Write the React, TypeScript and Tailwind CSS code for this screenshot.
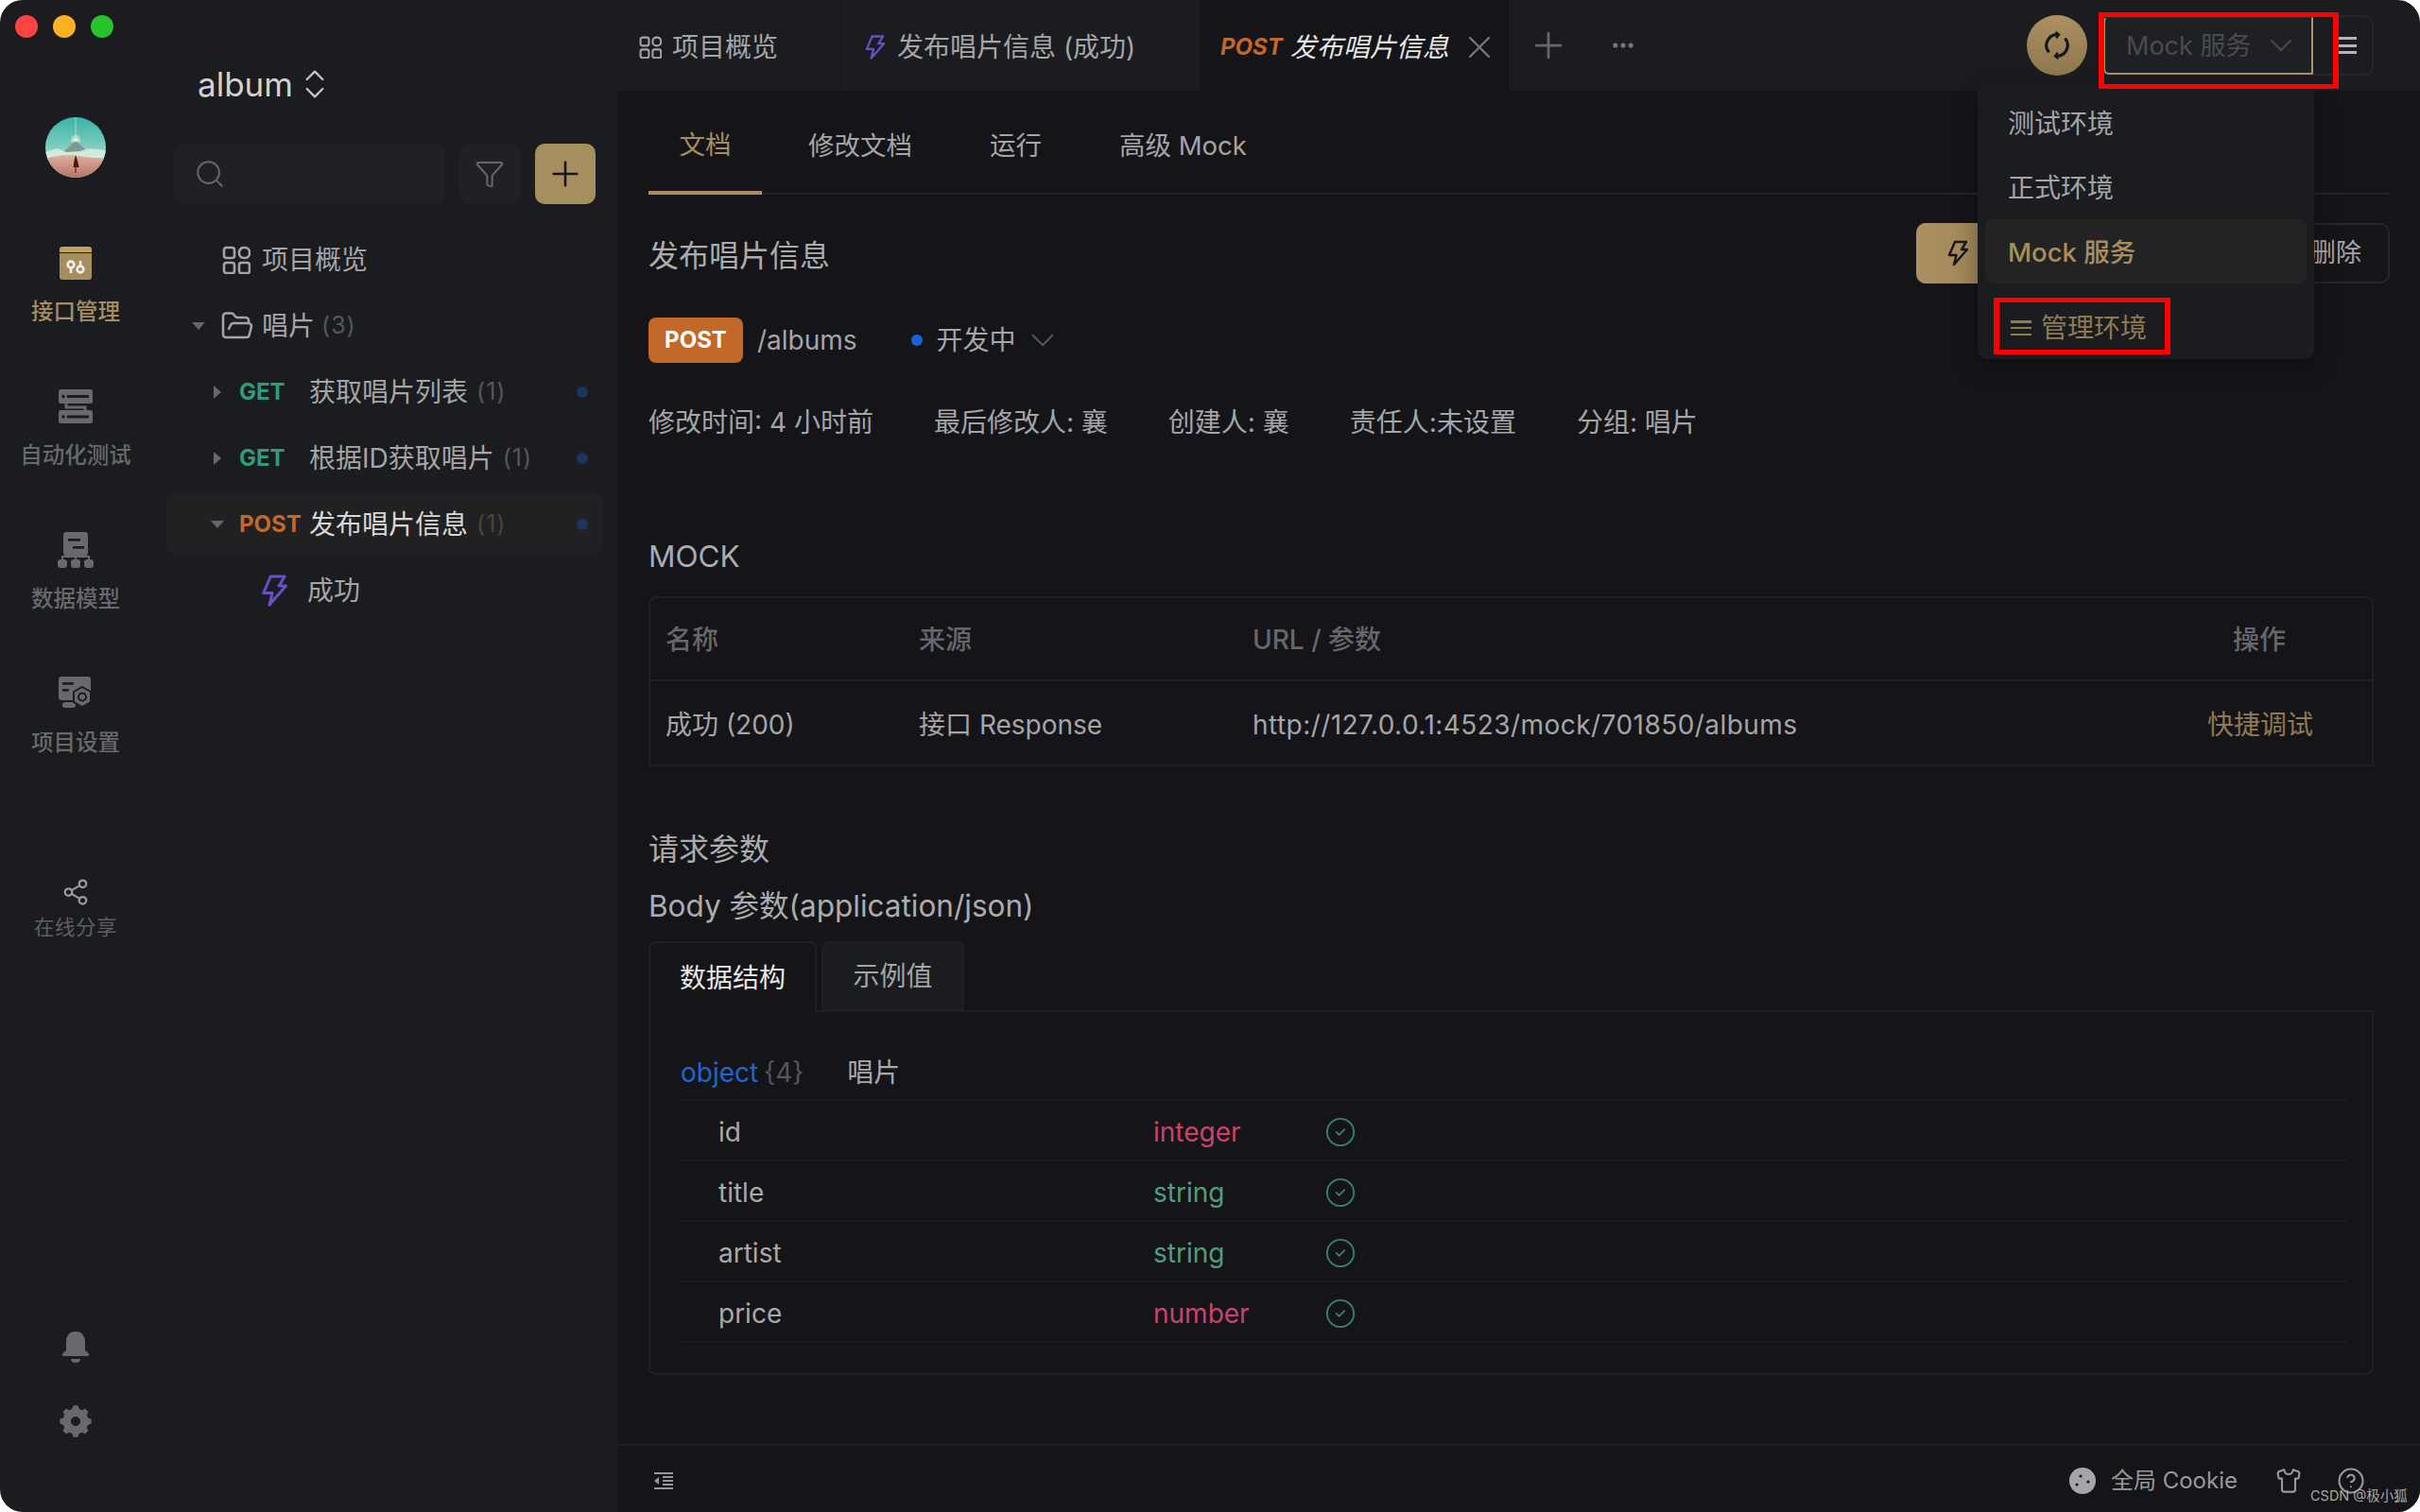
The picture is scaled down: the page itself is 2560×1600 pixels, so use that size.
import { ChevronDown, ChevronsUpDown, CircleCheck, CircleHelp, Ellipsis, Filter, FolderOpen, Plus, Search, Share2, Shirt, X } from "lucide-react";
import { RiSettings5Fill } from "react-icons/ri";
import type { ReactNode } from "react";

function Bolt({ className }: { className?: string }) {
  return (
    <svg viewBox="0 0 24 28" fill="none" stroke="currentColor" strokeWidth="2.4" strokeLinejoin="round" className={className}>
      <path d="M9 2h12l-5 8h6L8 26l2.5-10H3z" />
    </svg>
  );
}

function GridIcon({ className }: { className?: string }) {
  return (
    <svg viewBox="0 0 30 30" fill="none" stroke="currentColor" strokeWidth="2.6" className={className}>
      <rect x="2" y="2" width="11" height="11" rx="2.5" />
      <rect x="18" y="2" width="11" height="11" rx="5" />
      <rect x="2" y="18" width="11" height="11" rx="2.5" />
      <rect x="18" y="18" width="11" height="11" rx="2.5" />
    </svg>
  );
}

function Triangle({ dir }: { dir: "down" | "right" }) {
  if (dir === "down") {
    return <span className="h-0 w-0 border-x-[7px] border-t-[8px] border-x-transparent border-t-[#66676b]" />;
  }
  return <span className="mr-[3px] h-0 w-0 border-y-[7px] border-l-[8px] border-y-transparent border-l-[#66676b]" />;
}

function ApiIcon() {
  return (
    <svg viewBox="0 0 36 36" className="h-[36px] w-[36px]">
      <path d="M1 4a3 3 0 0 1 3-3h28a3 3 0 0 1 3 3v3H1z" fill="#c2a25c" />
      <path d="M1 8h34v25a3 3 0 0 1-3 3H4a3 3 0 0 1-3-3z" fill="#a78e5f" />
      <circle cx="13" cy="20" r="3.4" fill="none" stroke="#f4f1ea" strokeWidth="2.6" />
      <path d="M13 23v6M23 16v6" stroke="#f4f1ea" strokeWidth="2.6" />
      <circle cx="23" cy="25" r="3.4" fill="none" stroke="#f4f1ea" strokeWidth="2.6" />
    </svg>
  );
}

function AutoIcon() {
  return (
    <svg viewBox="0 0 36 36" className="h-[36px] w-[36px]">
      <rect x="0" y="0" width="36" height="15" rx="2.5" fill="#68696d" />
      <rect x="0" y="22" width="36" height="14" rx="2.5" fill="#68696d" />
      <path d="M8 15v4h20v3" fill="none" stroke="#68696d" strokeWidth="3" />
      <circle cx="5" cy="7.5" r="1.7" fill="#1a1c20" />
      <rect x="9" y="6" width="23" height="3" fill="#1a1c20" />
      <circle cx="5" cy="29" r="1.7" fill="#1a1c20" />
      <rect x="9" y="27.5" width="23" height="3" fill="#1a1c20" />
    </svg>
  );
}

function ModelIcon() {
  return (
    <svg viewBox="0 0 38 38" className="h-[38px] w-[38px]" fill="#68696d">
      <path d="M6 3a3 3 0 0 1 3-3h20a3 3 0 0 1 3 3v19a3 3 0 0 1-3 3H9a3 3 0 0 1-3-3z" />
      <rect x="11" y="7" width="13" height="2.6" fill="#1a1c20" />
      <rect x="16" y="15" width="12" height="2.6" fill="#1a1c20" />
      <rect x="0" y="29" width="10" height="9" rx="3" />
      <rect x="14" y="29" width="10" height="9" rx="3" />
      <rect x="28" y="29" width="10" height="9" rx="3" />
      <path d="M5 29v-3h28v3M19 25v4" stroke="#68696d" strokeWidth="2" fill="none" />
    </svg>
  );
}

function SettingIcon() {
  return (
    <svg viewBox="0 0 36 36" className="h-[36px] w-[36px]">
      <path d="M0 3a3 3 0 0 1 3-3h28a3 3 0 0 1 3 3v19a3 3 0 0 1-3 3H3a3 3 0 0 1-3-3z" fill="#68696d" />
      <rect x="4" y="6" width="12" height="2.6" fill="#1a1c20" />
      <rect x="4" y="13" width="7" height="2.6" fill="#1a1c20" />
      <rect x="4" y="27" width="14" height="6" rx="3" fill="#68696d" />
      <path d="M25 11l9 5v11l-9 5-9-5V16z" fill="#68696d" stroke="#1a1c20" strokeWidth="2" />
      <circle cx="25" cy="21.5" r="4" fill="none" stroke="#1a1c20" strokeWidth="2" />
    </svg>
  );
}

function BellIcon() {
  return (
    <svg viewBox="0 0 28 34" className="h-[34px] w-[28px]" fill="#68696d">
      <path d="M14 0c6.6 0 10 4.6 10 11v8c0 2 4 3.4 4 5.4 0 1.2-1 1.6-2 1.6H2c-1 0-2-.4-2-1.6C0 22.400 4 21 4 19v-8C4 4.600 7.400 0 14 0z" />
      <path d="M9 29h10c0 2.600-2.400 4-5 4s-5-1.400-5-4z" />
    </svg>
  );
}

function SyncIcon() {
  return (
    <svg viewBox="0 0 30 30" fill="none" stroke="#16171a" strokeWidth="3.2" className="h-[30px] w-[30px]">
      <path d="M16 3.600A11.500 11.500 0 0 0 6.500 22.500" />
      <path d="M14 26.400A11.500 11.500 0 0 0 23.500 7.500" />
      <path d="M13.500 1l3.500 2.800-2.800 3.500M16.500 29l-3.500-2.800 2.800-3.500" strokeWidth="2.4" />
    </svg>
  );
}

function Avatar() {
  return (
    <svg viewBox="0 0 64 64" className="h-[64px] w-[64px] rounded-full">
      <defs>
        <linearGradient id="sky" x1="0" y1="0" x2="0" y2="1">
          <stop offset="0" stopColor="#3ab3a6" />
          <stop offset="0.5" stopColor="#7fcfbf" />
          <stop offset="0.7" stopColor="#c8e6da" />
        </linearGradient>
        <linearGradient id="sand" x1="0" y1="0" x2="0" y2="1">
          <stop offset="0" stopColor="#dfb29d" />
          <stop offset="1" stopColor="#b5736a" />
        </linearGradient>
      </defs>
      <rect width="64" height="64" fill="url(#sky)" />
      <path d="M32 0v24" stroke="#d9f1e6" strokeWidth="0.6" />
      <circle cx="32" cy="24" r="5" fill="#dff3e2" opacity="0.55" />
      <path d="M19 37l9-9 4-3 4 3 9 9z" fill="#7f9892" />
      <circle cx="32" cy="24" r="2" fill="#f8efcf" />
      <path d="M0 37l12-4 10 4 14-1 10-3 18 2v9H0z" fill="#d8ece2" opacity="0.85" />
      <path d="M0 44q18-6 36-3t28 2v21H0z" fill="url(#sand)" />
      <path d="M32 40l2 6 1.500 7h-6l1-7z" fill="#4a1518" />
      <path d="M32 53v6" stroke="#8a4a48" strokeWidth="2" />
    </svg>
  );
}

function IndentIcon() {
  return (
    <svg viewBox="0 0 20 18" className="h-[18px] w-[20px]" fill="#98989a">
      <rect x="0" y="0" width="20" height="2" />
      <rect x="9" y="4" width="11" height="2" />
      <rect x="9" y="8" width="11" height="2" />
      <rect x="9" y="12" width="11" height="2" />
      <rect x="0" y="16" width="20" height="2" />
      <path d="M5 5v8L0 9z" />
    </svg>
  );
}

function RailItem({ icon, label, active }: { icon: ReactNode; label: string; active?: boolean }) {
  return (
    <div className="flex h-[152px] flex-col items-center pt-[12px]">
      <div className="flex h-[36px] items-center">{icon}</div>
      <div className={`mt-[18px] text-[23.5px] font-medium leading-[32px] ${active ? "text-[#a78e5f]" : "text-[#68696d]"}`}>{label}</div>
    </div>
  );
}

function ApiRow({ method, name, open, selected }: { method: string; name: string; open?: boolean; selected?: boolean }) {
  return (
    <div className={`relative flex items-center rounded-[10px] pt-[2px] ${selected ? "my-[2px] h-[66px] bg-[#212123]" : "h-[70px]"}`}>
      <div className="flex w-[77px] justify-end pr-[16px]">
        <Triangle dir={open ? "down" : "right"} />
      </div>
      <span className={`w-[74px] text-[24px] font-bold leading-none ${method === "GET" ? "text-[#2f9c77]" : "text-[#c26828]"}`}>{method}</span>
      <span className={selected ? "text-[#d8d8d8]" : "text-[#a5a5a7]"}>{name}</span>
      <span className={`ml-[9px] text-[25px] tracking-[1px] ${selected ? "text-[#4b4439]" : "text-[#56575b]"}`}>(1)</span>
      <span className="absolute right-[16px] h-[12px] w-[12px] rounded-full bg-[#1c3560]" />
    </div>
  );
}

function FieldRow({ name, type }: { name: string; type: "integer" | "string" | "number" }) {
  return (
    <div className="flex h-[64px] items-center border-b-2 border-[#1b1c21] pl-[40px] pt-[4px]">
      <span className="w-[460px] text-[#a9a9ab]">{name}</span>
      <span className={`w-[181px] ${type === "string" ? "text-[#4f9e7f]" : "text-[#c9446b]"}`}>{type}</span>
      <CircleCheck className="h-[34px] w-[34px] text-[#38806a]" strokeWidth={1.3} />
    </div>
  );
}

export default function App() {
  return (
    <div className="relative flex h-[1600px] w-[2560px] overflow-hidden rounded-[24px] bg-[#1a1c20] font-['Inter','Noto_Sans_CJK_SC',sans-serif] text-[28px] text-[#a5a5a7]">
      {/* left rail */}
      <div className="flex w-[160px] flex-col items-center">
        <div className="mt-[16px] flex gap-[16px] self-start pl-[16px]">
          <span className="h-[24px] w-[24px] rounded-full bg-[#fe4343]" />
          <span className="h-[24px] w-[24px] rounded-full bg-[#feb024]" />
          <span className="h-[24px] w-[24px] rounded-full bg-[#28c22c]" />
        </div>
        <div className="mt-[84px]">
          <Avatar />
        </div>
        <div className="mt-[60px]">
          <RailItem icon={<ApiIcon />} label="接口管理" active />
          <RailItem icon={<AutoIcon />} label="自动化测试" />
          <RailItem icon={<ModelIcon />} label="数据模型" />
          <RailItem icon={<SettingIcon />} label="项目设置" />
        </div>
        <div className="mt-[73px] flex flex-col items-center text-[#5e5f63]">
          <Share2 className="h-[30px] w-[30px] text-[#9c9c9e]" strokeWidth={1.8} />
          <span className="mt-[6px] text-[21.5px] tracking-[0.5px]">在线分享</span>
        </div>
        <div className="mt-auto flex flex-col items-center gap-[41px] pb-[76px] text-[#68696d]">
          <BellIcon />
          <RiSettings5Fill className="h-[40px] w-[40px]" />
        </div>
      </div>

      {/* api tree */}
      <div className="w-[494px] px-[16px]">
        <div className="flex h-[152px] items-start pl-[33px] pt-[67px]">
          <span className="text-[35px] leading-[44px] text-[#d2d2d4]">album</span>
          <ChevronsUpDown className="ml-[3px] mt-[2px] h-[40px] w-[40px] text-[#c5c5c7]" strokeWidth={1.4} />
        </div>
        <div className="flex h-[64px] gap-[16px] pl-[8px]">
          <div className="flex w-[286px] items-center rounded-[10px] bg-[#1f2125] pl-[21px]">
            <Search className="h-[34px] w-[34px] text-[#66676b]" strokeWidth={1.4} />
          </div>
          <div className="flex w-[64px] items-center justify-center rounded-[10px] bg-[#1f2125]">
            <Filter className="h-[32px] w-[32px] text-[#66676b]" strokeWidth={1.5} />
          </div>
          <div className="flex w-[64px] items-center justify-center rounded-[10px] bg-[#a78e5f]">
            <Plus className="h-[42px] w-[42px] text-[#16171a]" strokeWidth={1.5} />
          </div>
        </div>
        <div className="mt-[23px]">
          <div className="flex h-[70px] items-center pl-[59px] pt-[1px]">
            <GridIcon className="h-[30px] w-[30px] text-[#a5a5a7]" />
            <span className="ml-[12px]">项目概览</span>
          </div>
          <div className="flex h-[70px] items-center pt-[1px]">
            <div className="flex w-[57px] justify-end pr-[16px]">
              <Triangle dir="down" />
            </div>
            <FolderOpen className="h-[36px] w-[36px] text-[#a5a5a7]" strokeWidth={1.7} />
            <span className="ml-[8px]">唱片</span>
            <span className="ml-[7px] text-[25px] tracking-[1px] text-[#56575b]">(3)</span>
          </div>
          <ApiRow method="GET" name="获取唱片列表" />
          <ApiRow method="GET" name="根据ID获取唱片" />
          <ApiRow method="POST" name="发布唱片信息" open selected />
          <div className="flex h-[70px] items-center pl-[99px] pt-[1px]">
            <Bolt className="h-[36px] w-[30px] text-[#6a4fc4]" />
            <span className="ml-[20px]">成功</span>
          </div>
        </div>
      </div>

      {/* main column */}
      <div className="flex min-w-0 flex-1 flex-col">
        <div className="flex h-[96px] items-center">
          <div className="flex h-full w-[239px] items-center pl-[22px] pt-[3px]">
            <GridIcon className="h-[24px] w-[24px] text-[#a5a5a7]" />
            <span className="ml-[11px]">项目概览</span>
          </div>
          <div className="flex h-full w-[377px] items-center border-l-2 border-[#1d1f23] pl-[19px] pt-[3px]">
            <Bolt className="h-[28px] w-[23px] text-[#6a4fc4]" />
            <span className="ml-[12px]">发布唱片信息 (成功)</span>
          </div>
          <div className="flex h-full w-[326px] items-center bg-[#151519] pl-[21px] pt-[3px] italic">
            <span className="text-[24px] font-bold text-[#c26828]">POST</span>
            <span className="ml-[8px] text-[#e6e6e6]">发布唱片信息</span>
            <X className="ml-[12px] h-[40px] w-[40px] text-[#77787c]" strokeWidth={1.4} />
          </div>
          <Plus className="ml-[20px] h-[44px] w-[44px] text-[#66676b]" strokeWidth={1.5} />
          <Ellipsis className="ml-[43px] h-[28px] w-[28px] text-[#77787c]" strokeWidth={2.4} />
          <div className="ml-auto flex items-center pr-[49px]">
            <div className="flex h-[64px] w-[64px] items-center justify-center rounded-full bg-gradient-to-b from-[#ab9060] to-[#8f774e]">
              <SyncIcon />
            </div>
            <div className="ml-[17px] flex h-[62px] w-[222px] items-center justify-between rounded-l-[6px] border-2 border-[#a5946f] border-t-[#2e2f34] bg-[#1e2024] pl-[22px] pr-[12px] text-[27px] text-[#4a4b50]">
              <span className="pt-[3px]">Mock 服务</span>
              <ChevronDown className="h-[40px] w-[40px]" strokeWidth={1.2} />
            </div>
            <div className="flex h-[64px] w-[64px] items-center justify-end rounded-r-[10px] border-2 border-l-0 border-[#26272c] pr-[16px]">
              <div className="flex h-[18px] w-[24px] flex-col justify-between">
                <span className="h-[3px] bg-[#b5b5b7]" />
                <span className="h-[3px] bg-[#b5b5b7]" />
                <span className="h-[3px] bg-[#b5b5b7]" />
              </div>
            </div>
          </div>
        </div>

        <div className="flex min-h-0 flex-1 flex-col bg-[#151519]">
          <div className="min-h-0 flex-1 overflow-hidden pl-[32px] pr-[32px]">
            <div className="flex h-[110px] gap-[16px] border-b-2 border-[#232428] text-[27.5px]">
              <div className="-mb-[2px] flex w-[120px] items-center justify-center border-b-4 border-[#a78e5f] pt-[9px] text-[#a78e5f]">文档</div>
              <div className="flex items-center px-[33px] pt-[9px]">修改文档</div>
              <div className="flex items-center px-[33px] pt-[9px]">运行</div>
              <div className="flex items-center px-[33px] pt-[9px]">高级 Mock</div>
            </div>

            <div className="mt-[30px] flex h-[64px] items-center justify-between">
              <h1 className="pt-[5px] text-[32px] font-normal text-[#acacae]">发布唱片信息</h1>
              <div className="flex h-full gap-[16px]">
                <div className="flex w-[300px] items-center rounded-[10px] bg-gradient-to-r from-[#ab9060] to-[#7d6a46] pl-[32px]">
                  <Bolt className="h-[30px] w-[24px] text-[#16171a]" />
                </div>
                <div className="flex w-[185px] items-center justify-end rounded-[10px] border-2 border-[#26272c] pr-[28px] text-[27px]">删除</div>
              </div>
            </div>

            <div className="mt-[36px] flex h-[48px] items-center">
              <span className="flex h-full w-[100px] items-center justify-center rounded-[8px] bg-[#c26828] text-[24px] font-bold text-white">POST</span>
              <span className="ml-[15px]">/albums</span>
              <span className="ml-[57px] h-[12px] w-[12px] rounded-full bg-[#1764d8]" />
              <span className="ml-[15px]">开发中</span>
              <ChevronDown className="ml-[7px] h-[42px] w-[42px] text-[#55565a]" strokeWidth={1.2} />
            </div>

            <div className="mt-[42px] flex h-[40px] items-center gap-[64px] pt-[1px]">
              <span>修改时间: 4 小时前</span>
              <span>最后修改人: 襄</span>
              <span>创建人: 襄</span>
              <span>责任人:未设置</span>
              <span>分组: 唱片</span>
            </div>

            <h2 className="mt-[103px] h-[40px] text-[31.5px] font-normal leading-[40px] text-[#acacae]">MOCK</h2>

            <div className="mr-[17px] mt-[22px] rounded-t-[8px] border-2 border-[#1f2025]">
              <div className="flex h-[88px] items-center border-b-2 border-[#1f2025] pl-[16px] pt-[2px] font-medium text-[#66676b]">
                <span className="w-[268px]">名称</span>
                <span className="w-[353px]">来源</span>
                <span className="flex-1">URL / 参数</span>
                <span className="mr-[91px]">操作</span>
              </div>
              <div className="flex h-[88px] items-center pl-[16px] pt-[3px]">
                <span className="w-[268px]">成功 (200)</span>
                <span className="w-[353px]">接口 Response</span>
                <span className="flex-1 tracking-[0.45px]">http://127.0.0.1:4523/mock/701850/albums</span>
                <span className="mr-[62px] text-[#8f7a51]">快捷调试</span>
              </div>
            </div>

            <h2 className="mt-[68px] h-[40px] text-[32px] font-normal leading-[40px] text-[#acacae]">请求参数</h2>
            <h2 className="mt-[20px] h-[40px] text-[31.5px] font-normal leading-[40px] text-[#acacae]">Body 参数(application/json)</h2>

            <div className="mr-[17px] mt-[17px]">
              <div className="relative z-10 -mb-[2px] flex h-[75px] gap-[5px]">
                <div className="flex w-[178px] items-center justify-center rounded-t-[8px] border-2 border-b-0 border-[#1f2025] bg-[#151519] text-[#e8e8e8]">数据结构</div>
                <div className="flex h-[73px] w-[151px] items-center justify-center rounded-t-[8px] border-2 border-[#1f2025] bg-[#1a1c20]">示例值</div>
              </div>
              <div className="h-[386px] rounded-b-[8px] border-2 border-[#1f2025] pl-[32px] pr-[26px] pt-[36px]">
                <div className="flex h-[58px] items-center border-b-2 border-[#1b1c21]">
                  <span className="text-[#1e66d0]">object</span>
                  <span className="ml-[6px] text-[#55565a]">{"{4}"}</span>
                  <span className="ml-[46px] text-[#a9a9ab]">唱片</span>
                </div>
                <FieldRow name="id" type="integer" />
                <FieldRow name="title" type="string" />
                <FieldRow name="artist" type="string" />
                <FieldRow name="price" type="number" />
              </div>
            </div>
          </div>

          <div className="flex h-[72px] shrink-0 items-center border-t-2 border-[#1f2025] pl-[38px] pr-[58px] pt-[3px] text-[#99999b]">
            <IndentIcon />
            <svg viewBox="0 0 28 28" className="ml-auto h-[28px] w-[28px]">
              <circle cx="14" cy="14" r="14" fill="#a5a5a7" />
              <circle cx="12" cy="9" r="1.6" fill="#151519" />
              <circle cx="8" cy="18" r="1.6" fill="#151519" />
              <circle cx="20" cy="15" r="1.6" fill="#151519" />
            </svg>
            <span className="ml-[16px] text-[24px]">全局 Cookie</span>
            <Shirt className="ml-[40px] h-[28px] w-[28px]" strokeWidth={1.8} />
            <CircleHelp className="ml-[37px] h-[30px] w-[30px]" strokeWidth={1.7} />
          </div>
        </div>
      </div>

      {/* environment dropdown */}
      <div className="absolute left-[2092px] top-[88px] flex h-[292px] w-[356px] flex-col rounded-[10px] bg-[#1a1c20] px-[8px] pt-[8px] shadow-[0_8px_24px_rgba(0,0,0,0.35)]">
        <div className="flex h-[68px] items-center pl-[24px] pt-[1px]">测试环境</div>
        <div className="flex h-[68px] items-center pl-[24px] pt-[1px]">正式环境</div>
        <div className="flex h-[68px] items-center rounded-[8px] bg-[#232323] pl-[24px] pt-[3px] text-[27.5px] font-medium text-[#a78e5f]">Mock 服务</div>
        <div className="mt-[14px] flex h-[60px] items-center pl-[27px] pt-[6px] text-[#8f7a51]">
          <div className="flex h-[16px] w-[22px] flex-col justify-between">
            <span className="h-[2.5px] bg-[#8f7a51]" />
            <span className="h-[2.5px] bg-[#8f7a51]" />
            <span className="h-[2.5px] bg-[#8f7a51]" />
          </div>
          <span className="ml-[10px]">管理环境</span>
        </div>
      </div>

      {/* red annotation boxes */}
      <div className="absolute left-[2220px] top-[13px] h-[81px] w-[254px] border-x-[6px] border-y-[5px] border-[#ff0000]" />
      <div className="absolute left-[2109px] top-[315px] h-[60px] w-[187px] border-x-[6px] border-y-[5px] border-[#ff0000]" />

      {/* watermark */}
      <span className="absolute left-[2444px] top-[1574px] text-[14.5px] leading-[18px] text-[#a8a8a8]">CSDN @极小狐</span>
    </div>
  );
}
